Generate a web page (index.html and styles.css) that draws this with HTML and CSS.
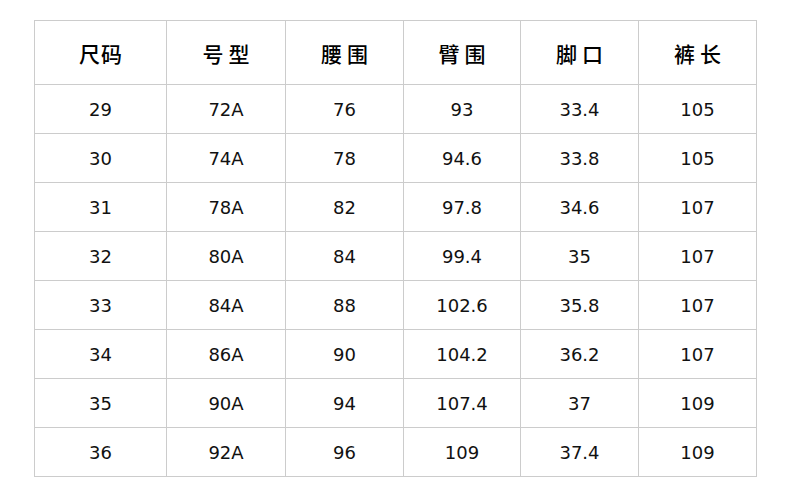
FILE: index.html
```html
<!DOCTYPE html>
<html lang="zh">
<head>
<meta charset="utf-8">
<link rel="stylesheet" href="styles.css">
</head>
<body>
<table class="size-table">
  <colgroup>
    <col class="c1"><col class="c2"><col class="c3"><col class="c4"><col class="c5"><col class="c6">
  </colgroup>
  <thead>
    <tr><th class="tight">尺码</th><th>号型</th><th>腰围</th><th>臂围</th><th>脚口</th><th>裤长</th></tr>
  </thead>
  <tbody>
    <tr><td>29</td><td>72A</td><td>76</td><td>93</td><td>33.4</td><td>105</td></tr>
    <tr><td>30</td><td>74A</td><td>78</td><td>94.6</td><td>33.8</td><td>105</td></tr>
    <tr><td>31</td><td>78A</td><td>82</td><td>97.8</td><td>34.6</td><td>107</td></tr>
    <tr><td>32</td><td>80A</td><td>84</td><td>99.4</td><td>35</td><td>107</td></tr>
    <tr><td>33</td><td>84A</td><td>88</td><td>102.6</td><td>35.8</td><td>107</td></tr>
    <tr><td>34</td><td>86A</td><td>90</td><td>104.2</td><td>36.2</td><td>107</td></tr>
    <tr><td>35</td><td>90A</td><td>94</td><td>107.4</td><td>37</td><td>109</td></tr>
    <tr><td>36</td><td>92A</td><td>96</td><td>109</td><td>37.4</td><td>109</td></tr>
  </tbody>
</table>
</body>
</html>
```
FILE: styles.css
```css
html, body {
  margin: 0;
  padding: 0;
  background: #fff;
}
body {
  padding: 20px 0 0 34px;
}
.size-table {
  border-collapse: collapse;
  table-layout: fixed;
  width: 722px;
  font-family: "DejaVu Sans", "Noto Sans CJK SC", sans-serif;
  color: #111;
}
.c1 { width: 132px; }
.c2 { width: 119px; }
.c3 { width: 118px; }
.c4 { width: 117px; }
.c5 { width: 118px; }
.c6 { width: 118px; }
.size-table th,
.size-table td {
  border: 1px solid #cccccc;
  text-align: center;
  padding: 0;
}
.size-table th {
  height: 63px;
  font-family: "Noto Sans CJK SC", sans-serif;
  font-weight: 500;
  font-size: 21px;
  color: #000;
  letter-spacing: 5px;
  text-indent: 5px;
}
.size-table th.tight {
  letter-spacing: 1px;
  text-indent: 1px;
}
.size-table td {
  height: 48px;
  font-size: 18px;
  font-weight: normal;
}
```
